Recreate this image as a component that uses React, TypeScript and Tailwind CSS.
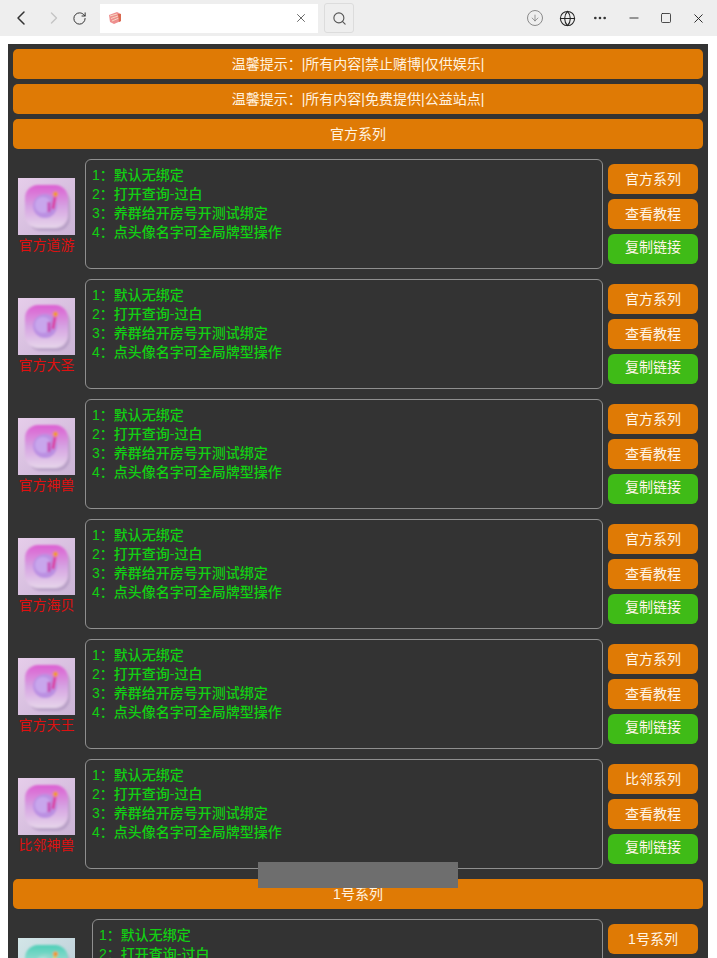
import { ArrowDown, ChevronLeft, ChevronRight, Globe, Minus, MoreHorizontal, RotateCw, Search, Square, X } from 'lucide-react'

const notes = ['默认无绑定', '打开查询-过白', '养群给开房号开测试绑定', '点头像名字可全局牌型操作']

const rows = [
  { name: '官方道游', series: '官方系列' },
  { name: '官方大圣', series: '官方系列' },
  { name: '官方神兽', series: '官方系列' },
  { name: '官方海贝', series: '官方系列' },
  { name: '官方天王', series: '官方系列' },
  { name: '比邻神兽', series: '比邻系列' },
]

function Bar({ children }: { children: React.ReactNode }) {
  return (
    <div className="h-[30px] rounded-[5px] bg-[#df7a05] flex items-center justify-center text-[14px] text-[#fff3e0]">
      {children}
    </div>
  )
}

function Btn({ label, green }: { label: string; green?: boolean }) {
  return (
    <div
      className={
        'w-[90px] h-[30px] rounded-[6px] flex items-center justify-center text-[14px] text-[#fff6e8] ' +
        (green ? 'bg-[#3fbb17] pb-[3px]' : 'bg-[#df7a05]')
      }
    >
      {label}
    </div>
  )
}

function Avatar({ teal }: { teal?: boolean }) {
  const id = teal ? 't' : 'p'
  return (
    <svg width="57" height="57" viewBox="0 0 57 57" className="block shrink-0">
      <defs>
        <linearGradient id={id + 'bg'} x1="0" y1="0" x2="1" y2="1">
          <stop offset="0" stopColor={teal ? '#d3e6e8' : '#e6cdea'} />
          <stop offset="1" stopColor={teal ? '#b9c9d4' : '#cbb4d6'} />
        </linearGradient>
        <linearGradient id={id + 'tile'} x1="0" y1="0" x2="0" y2="1">
          <stop offset="0" stopColor={teal ? '#4fcfb8' : '#dc5fd2'} />
          <stop offset="0.5" stopColor={teal ? '#a8e0d8' : '#d6a2e2'} />
          <stop offset="1" stopColor={teal ? '#e4eeee' : '#e6d6ea'} />
        </linearGradient>
        <filter id={id + 'soft'} x="-10%" y="-10%" width="120%" height="120%">
          <feGaussianBlur stdDeviation="0.8" />
        </filter>
      </defs>
      <rect width="57" height="57" fill={`url(#${id}bg)`} />
      <g filter={`url(#${id}soft)`}>
        <rect x="10" y="11" width="42" height="42" rx="13" fill="#a58cb8" opacity="0.55" />
        <rect x="7" y="7" width="43" height="43" rx="13" fill={`url(#${id}tile)`} />
        <circle cx="27" cy="28" r="12" fill={teal ? '#8fd8cc' : '#bb90e2'} />
        <circle cx="25" cy="27" r="8" fill={teal ? '#a6e4da' : '#c8a6ec'} />
        <path d="M31 34 L31 24" stroke={teal ? '#f2d84a' : '#c846b4'} strokeWidth="3" />
        <path d="M35 31 L37 19" stroke={teal ? '#f2d84a' : '#dc3aa0'} strokeWidth="3" />
        <circle cx="37.5" cy="16" r="2.6" fill="#f0982a" />
      </g>
    </svg>
  )
}

function Row({ name, series, wide, teal }: { name?: string; series: string; wide?: boolean; teal?: boolean }) {
  return (
    <div className="flex h-[110px] mt-[10px] px-[10px]">
      <div className={'shrink-0 flex flex-col pt-[19px] ' + (wide ? 'w-[74px]' : 'w-[67px]')}>
        <Avatar teal={teal} />
        {name && (
          <div className="w-[57px] text-center text-[14px] leading-[20px] text-[#dd1111] whitespace-nowrap">{name}</div>
        )}
      </div>
      <div className="flex-1 min-w-0 rounded-[6px] border border-[#8f8f8f] pt-[6px] pl-[6px] text-[14px] font-medium leading-[19px] text-[#12cf12]">
        {notes.map((n, i) => (
          <div key={n} className="whitespace-nowrap">
            {i + 1}：{n}
          </div>
        ))}
      </div>
      <div className="shrink-0 w-[90px] ml-[5px] flex flex-col gap-[5px] pt-[5px]">
        <Btn label={series} />
        <Btn label="查看教程" />
        <Btn label="复制链接" green />
      </div>
    </div>
  )
}

function Toolbar() {
  return (
    <div className="h-[36px] bg-[#eeeeee] flex items-center text-[#333]">
      <ChevronLeft className="w-[24px] h-[24px] ml-[9px]" strokeWidth={1.5} />
      <ChevronRight className="w-[20px] h-[20px] ml-[11px] text-[#c4c4c4]" strokeWidth={1.6} />
      <RotateCw className="w-[15px] h-[15px] ml-[8px]" strokeWidth={1.6} />
      <div className="ml-[13px] w-[218px] h-[29px] bg-white flex items-center pl-[8px] pr-[10px]">
        <svg width="14" height="14" viewBox="0 0 14 14">
          <path d="M1 4 L9 1 L13 3 L13 10 L6 13 L2 11 Z" fill="#ee8f8f" />
          <path d="M2 5 L9 3 M3 7.5 L10 5 M4 10 L11 7" stroke="#f8d9c0" strokeWidth="1" />
          <path d="M10 3 L13 3 L13 10 L11 11 Z" fill="#d96a50" />
        </svg>
        <X className="w-[14px] h-[14px] ml-auto text-[#555]" strokeWidth={1.5} />
      </div>
      <div className="ml-[6px] w-[30px] h-[30px] rounded-[3px] border border-[#dcdcdc] flex items-center justify-center">
        <Search className="w-[15px] h-[15px] text-[#555]" strokeWidth={1.8} />
      </div>
      <div className="ml-auto flex items-center">
        <div className="w-[16px] h-[16px] rounded-full border border-[#8a8a8a] flex items-center justify-center">
          <ArrowDown className="w-[10px] h-[10px] text-[#777]" strokeWidth={1.8} />
        </div>
        <Globe className="w-[17px] h-[17px] ml-[16px] text-[#222]" strokeWidth={1.5} />
        <MoreHorizontal className="w-[16px] h-[16px] ml-[16px] text-[#333]" strokeWidth={2} />
        <Minus className="w-[14px] h-[14px] ml-[19px] text-[#222]" strokeWidth={1.5} />
        <Square className="w-[12px] h-[12px] ml-[19px] text-[#222]" strokeWidth={1.6} />
        <X className="w-[15px] h-[15px] ml-[19px] mr-[11px] text-[#222]" strokeWidth={1.5} />
      </div>
    </div>
  )
}

export default function App() {
  return (
    <div
      className="relative h-[958px] overflow-hidden bg-white"
      style={{ fontFamily: '"Liberation Sans", "Noto Sans CJK SC", sans-serif' }}
    >
      <Toolbar />
      <div className="mt-[8px] ml-[8px] w-[700px] h-[914px] bg-[#333333] overflow-hidden">
        <div className="flex flex-col gap-[5px] px-[5px] pt-[5px]">
          <Bar>温馨提示：|所有内容|禁止赌博|仅供娱乐|</Bar>
          <Bar>温馨提示：|所有内容|免费提供|公益站点|</Bar>
          <Bar>官方系列</Bar>
        </div>
        {rows.map((r) => (
          <Row key={r.name} name={r.name} series={r.series} />
        ))}
        <div className="px-[5px] mt-[10px]">
          <Bar>1号系列</Bar>
        </div>
        <Row series="1号系列" wide teal />
      </div>
      {/* toast */}
      <div className="absolute left-[258px] top-[862px] w-[200px] h-[26px] bg-[#6e6e6e]" />
    </div>
  )
}
